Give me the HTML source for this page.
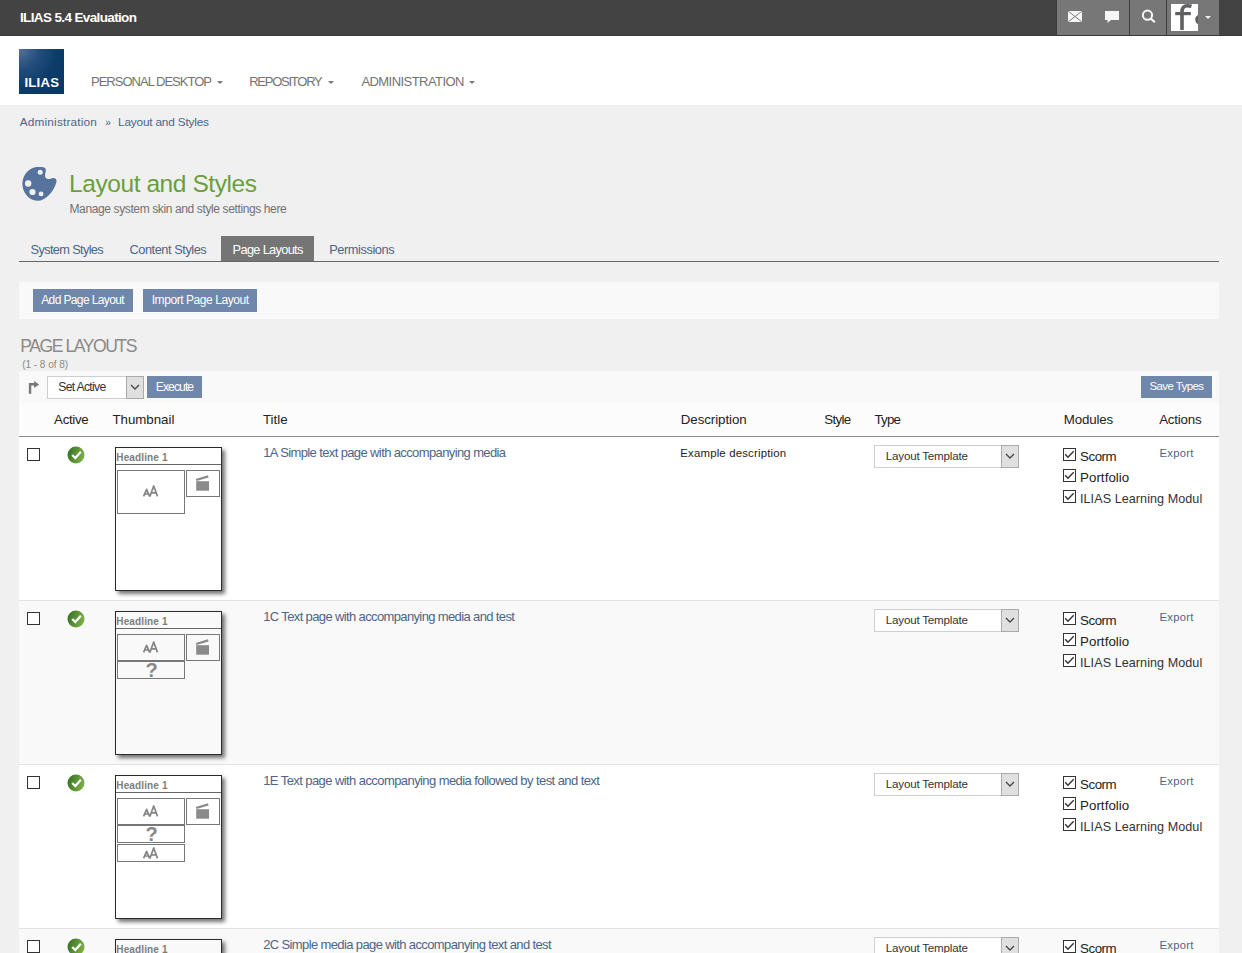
<!DOCTYPE html>
<html><head><meta charset="utf-8"><style>
*{box-sizing:border-box}
html,body{margin:0;padding:0}
body{width:1242px;height:953px;overflow:hidden;background:#f0f0f0;font-family:"Liberation Sans",sans-serif;position:relative;color:#161616}
.abs{position:absolute;white-space:nowrap;line-height:normal}
.r{position:absolute}
.caret{position:absolute;width:0;height:0;border-left:3px solid transparent;border-right:3px solid transparent;border-top:3px solid #777}
.btn{position:absolute;background:#6e87aa}
.sel{position:absolute;border:1px solid #cfcfcf;background:#fff}
.selb{position:absolute;background:#e0e0e0;border:1px solid #aaa}
.cb{position:absolute;width:13px;height:13px;border:1.2px solid #333;background:#fff}
.thumb{position:absolute;width:107px;height:144px;border:1px solid #2a2a2a;box-shadow:3px 3px 4px rgba(0,0,0,0.55)}
.tbx{position:absolute;border:1px solid #777}
</style></head><body>
<div class="r" style="left:0;top:0;width:1242px;height:36px;background:#434343;border-bottom:1px solid #383838"></div>
<div class="abs" style="left:20.00px;top:10.00px;font-size:13.5px;color:#fff;letter-spacing:-0.635px;font-weight:bold;">ILIAS 5.4 Evaluation</div>
<div class="r" style="left:1056px;top:0;width:163px;height:35px;background:#777;border-left:1px solid #3c3c3c"></div>
<div class="r" style="left:1129px;top:0;width:1px;height:35px;background:#3a3a3a"></div>
<div class="r" style="left:1166px;top:0;width:1px;height:35px;background:#3a3a3a"></div>
<svg class="r" style="left:1068px;top:11px" width="14" height="11" viewBox="0 0 14 11"><rect x="0" y="0" width="14" height="11" fill="#f7f7f7"/><path d="M0.3 0.3 L13.7 10.7 M13.7 0.3 L0.3 10.7" fill="none" stroke="#7a7a7a" stroke-width="1"/></svg>
<svg class="r" style="left:1105px;top:11px" width="14" height="12" viewBox="0 0 14 12"><path d="M0 0 H14 V9 H6 L2.5 12 V9 H0 Z" fill="#f5f5f5"/></svg>
<svg class="r" style="left:1139px;top:7px" width="18" height="18" viewBox="0 0 18 18"><circle cx="8.5" cy="8.2" r="4.6" fill="none" stroke="#f8f8f8" stroke-width="2"/><path d="M11.8 11.5 L15.8 15.2" stroke="#f8f8f8" stroke-width="2.2"/></svg>
<div class="r" style="left:1171px;top:4px;width:27px;height:27px;background:#fff;overflow:hidden"><svg width="27" height="27" viewBox="0 0 27 27" style="position:absolute;left:0;top:0"><path d="M11 26 V8 C11 3.5 13 1.8 16.5 1.8 C18 1.8 19.5 2 20.5 2.3" fill="none" stroke="#5f6063" stroke-width="3.6"/><path d="M4.2 9.6 H19.8" stroke="#5f6063" stroke-width="3.2"/><circle cx="29.2" cy="15.6" r="3.6" fill="none" stroke="#5f6063" stroke-width="2.8"/></svg></div>
<div class="caret" style="left:1205px;top:16px;border-top-color:#f0f0f0"></div>
<div class="r" style="left:0;top:36px;width:1242px;height:69px;background:#fff"></div>
<div class="r" style="left:19px;top:49px;width:45px;height:45px;background:radial-gradient(circle at 0% 0%,#54729a 0%,#234d7a 32%,#0c3b69 62%,#073765 100%)"></div>
<div class="abs" style="left:24.50px;top:74.60px;font-size:13.2px;color:#fff;letter-spacing:0.194px;font-weight:bold;">ILIAS</div>
<div class="abs" style="left:91.00px;top:74.00px;font-size:13px;color:#737373;letter-spacing:-0.990px;">PERSONAL DESKTOP</div>
<div class="caret" style="left:217px;top:81px"></div>
<div class="abs" style="left:249.20px;top:74.00px;font-size:13px;color:#737373;letter-spacing:-1.240px;">REPOSITORY</div>
<div class="caret" style="left:328px;top:81px"></div>
<div class="abs" style="left:361.40px;top:74.00px;font-size:13px;color:#737373;letter-spacing:-0.557px;">ADMINISTRATION</div>
<div class="caret" style="left:469px;top:81px"></div>
<div class="abs" style="left:19.80px;top:115.00px;font-size:11.8px;color:#4c6586;letter-spacing:0.173px;">Administration</div>
<div class="abs" style="left:105.20px;top:117.30px;font-size:10px;color:#4c6586;letter-spacing:0.000px;">»</div>
<div class="abs" style="left:118.00px;top:115.00px;font-size:11.8px;color:#4c6586;letter-spacing:-0.176px;">Layout and Styles</div>
<svg class="r" style="left:18px;top:162px" width="44" height="44" viewBox="0 0 44 44">
<path fill="#55739d" d="M18.5 5.1 C23 4.8 26 4.8 27.5 6.5 C28.5 8 27 11 27 14 C27 16.5 30 18 33 16.5 C36 15 39 16.5 38.5 19.5 C37 26 33 33 25 37.5 C18 41 9 37 5.5 28 C3 21 5 13 10 9 C12.5 7 15.5 5.5 18.5 5.1 Z"/>
<circle cx="22.2" cy="10.2" r="2.5" fill="#f0f0f0"/><circle cx="10.2" cy="21.5" r="3.2" fill="#f0f0f0"/><circle cx="14.5" cy="30" r="3.1" fill="#f0f0f0"/><circle cx="23.1" cy="31.9" r="2.4" fill="#f0f0f0"/></svg>
<div class="abs" style="left:69.00px;top:170.00px;font-size:24.5px;color:#6a9f3c;letter-spacing:-0.423px;">Layout and Styles</div>
<div class="abs" style="left:69.50px;top:202.20px;font-size:12px;color:#707070;letter-spacing:-0.380px;">Manage system skin and style settings here</div>
<div class="r" style="left:221px;top:236px;width:93px;height:25px;background:#757575"></div>
<div class="abs" style="left:30.60px;top:242.00px;font-size:12.8px;color:#4c6586;letter-spacing:-0.666px;">System Styles</div>
<div class="abs" style="left:129.50px;top:242.00px;font-size:12.8px;color:#4c6586;letter-spacing:-0.459px;">Content Styles</div>
<div class="abs" style="left:232.60px;top:242.00px;font-size:12.8px;color:#fff;letter-spacing:-0.679px;">Page Layouts</div>
<div class="abs" style="left:329.20px;top:242.00px;font-size:12.8px;color:#4c6586;letter-spacing:-0.430px;">Permissions</div>
<div class="r" style="left:19px;top:261px;width:1200px;height:1px;background:#666"></div>
<div class="r" style="left:19px;top:282px;width:1200px;height:37px;background:#f9f9f9"></div>
<div class="btn" style="left:33px;top:289px;width:100px;height:23px"></div>
<div class="abs" style="left:41.20px;top:293.20px;font-size:12px;color:#fff;letter-spacing:-0.614px;">Add Page Layout</div>
<div class="btn" style="left:143px;top:289px;width:114px;height:23px"></div>
<div class="abs" style="left:151.70px;top:293.20px;font-size:12px;color:#fff;letter-spacing:-0.427px;">Import Page Layout</div>
<div class="abs" style="left:20.30px;top:336.00px;font-size:17.6px;color:#8a8a8a;letter-spacing:-1.475px;">PAGE LAYOUTS</div>
<div class="abs" style="left:22.20px;top:359.00px;font-size:10px;color:#8a8a8a;letter-spacing:-0.023px;">(1 - 8 of 8)</div>
<div class="r" style="left:19px;top:371px;width:1200px;height:582px;background:#fff"></div>
<div class="r" style="left:19px;top:371px;width:1200px;height:32px;background:#f9f9f9"></div>
<div class="r" style="left:19px;top:403px;width:1200px;height:32px;background:#fcfcfc"></div>
<div class="r" style="left:19px;top:436px;width:1200px;height:1px;background:#8c8c8c;box-shadow:0 1px 1px rgba(0,0,0,0.12)"></div>
<svg class="r" style="left:28px;top:380px" width="12" height="14" viewBox="0 0 12 14"><path d="M2.05 13.8 V4.3 H7" fill="none" stroke="#777" stroke-width="2.4"/><path d="M6.1 0.9 L11.1 4.4 L6.1 8 Z" fill="#777"/></svg>
<div class="sel" style="left:47px;top:376px;width:97px;height:23px"></div><div class="selb" style="left:126px;top:376px;width:18px;height:23px"></div><svg class="r" style="left:130.0px;top:384.0px" width="10" height="6" viewBox="0 0 10 6"><path d="M1 1 L5 5 L9 1" fill="none" stroke="#444" stroke-width="1.3"/></svg>
<div class="abs" style="left:58.30px;top:380.20px;font-size:12.2px;color:#333;letter-spacing:-0.692px;">Set Active</div>
<div class="btn" style="left:147px;top:376px;width:55px;height:22px"></div>
<div class="abs" style="left:155.80px;top:380.20px;font-size:12.2px;color:#fff;letter-spacing:-0.951px;">Execute</div>
<div class="btn" style="left:1141px;top:376px;width:71px;height:22px"></div>
<div class="abs" style="left:1149.40px;top:380.20px;font-size:11.5px;color:#fff;letter-spacing:-0.573px;">Save Types</div>
<div class="abs" style="left:54.10px;top:412.00px;font-size:13.3px;color:#222;letter-spacing:-0.328px;">Active</div>
<div class="abs" style="left:112.40px;top:412.00px;font-size:13.3px;color:#222;letter-spacing:-0.014px;">Thumbnail</div>
<div class="abs" style="left:262.90px;top:412.00px;font-size:13.3px;color:#222;letter-spacing:0.049px;">Title</div>
<div class="abs" style="left:680.80px;top:412.00px;font-size:13.3px;color:#222;letter-spacing:-0.060px;">Description</div>
<div class="abs" style="left:824.20px;top:412.00px;font-size:13.3px;color:#222;letter-spacing:-0.623px;">Style</div>
<div class="abs" style="left:874.50px;top:412.00px;font-size:13.3px;color:#222;letter-spacing:-0.787px;">Type</div>
<div class="abs" style="left:1063.70px;top:412.00px;font-size:13.3px;color:#222;letter-spacing:-0.129px;">Modules</div>
<div class="abs" style="left:1159.20px;top:412.00px;font-size:13.3px;color:#222;letter-spacing:-0.187px;">Actions</div>
<div class="r" style="left:19px;top:437px;width:1200px;height:164px;background:#fff;border-bottom:1px solid #e2e2e2"></div>
<div class="cb" style="left:27px;top:448px"></div>
<svg class="r" style="left:67px;top:446px" width="18" height="18" viewBox="0 0 18 18">
<defs><linearGradient id="g0" x1="0" y1="0" x2="1" y2="0.3"><stop offset="0" stop-color="#2f6d1f"/><stop offset="1" stop-color="#7aad45"/></linearGradient></defs>
<circle cx="9" cy="9" r="8.5" fill="url(#g0)"/>
<path d="M5.2 9.0 L8.3 12.1 L13.9 5.8" fill="none" stroke="#fff" stroke-width="2.3"/></svg>
<div class="thumb" style="left:115px;top:447px"><div class="r" style="left:0;top:16px;width:105px;height:1px;background:#666"></div><div class="tbx" style="left:1px;top:22px;width:68px;height:44px"></div><div class="tbx" style="left:70px;top:22px;width:34px;height:27px"></div></div><div class="abs" style="left:116.30px;top:451.80px;font-size:10px;color:#7d7d7d;letter-spacing:0.133px;font-weight:bold;">Headline 1</div><svg class="r" style="left:195px;top:474px" width="15" height="18" viewBox="0 0 15 18">
<rect x="1.2" y="7.2" width="12.8" height="9.5" fill="#8a8a8a"/>
<path d="M0.8 4.9 L12.9 1.2 L13.6 3.6 L1.5 7.1 Z" fill="#8a8a8a"/></svg><svg class="r" style="left:141px;top:484px" width="18" height="14" viewBox="0 0 18 14"><path d="M2.6 12.4 L5.6 5.4 L8.6 12.4 M3.9 10.0 H7.3 M8.9 12.4 L12.7 2.0 L16.5 12.4 M10.5 8.9 H14.9" fill="none" stroke="#858585" stroke-width="1.7" stroke-linejoin="round"/></svg>
<div class="abs" style="left:263.20px;top:445.30px;font-size:13px;color:#4c6586;letter-spacing:-0.617px;">1A Simple text page with accompanying media</div>
<div class="abs" style="left:680.30px;top:447.00px;font-size:11.4px;color:#222;letter-spacing:0.180px;">Example description</div>
<div class="sel" style="left:874px;top:445px;width:145px;height:23px"></div><div class="selb" style="left:1001px;top:445px;width:18px;height:23px"></div><svg class="r" style="left:1005.0px;top:453.0px" width="10" height="6" viewBox="0 0 10 6"><path d="M1 1 L5 5 L9 1" fill="none" stroke="#444" stroke-width="1.3"/></svg>
<div class="abs" style="left:885.80px;top:449.00px;font-size:11.6px;color:#333;letter-spacing:-0.201px;">Layout Template</div>
<div class="cb" style="left:1063px;top:448px"></div><svg class="r" style="left:1063px;top:448px" width="13" height="13" viewBox="0 0 13 13"><path d="M2.2 6.2 L4.9 9.2 L10.7 3.2" fill="none" stroke="#333" stroke-width="1.4"/></svg>
<div class="abs" style="left:1080.00px;top:449.00px;font-size:13.3px;color:#222;letter-spacing:-0.434px;">Scorm</div>
<div class="cb" style="left:1063px;top:469px"></div><svg class="r" style="left:1063px;top:469px" width="13" height="13" viewBox="0 0 13 13"><path d="M2.2 6.2 L4.9 9.2 L10.7 3.2" fill="none" stroke="#333" stroke-width="1.4"/></svg>
<div class="abs" style="left:1080.00px;top:470.00px;font-size:13.3px;color:#222;letter-spacing:0.061px;">Portfolio</div>
<div class="cb" style="left:1063px;top:490px"></div><svg class="r" style="left:1063px;top:490px" width="13" height="13" viewBox="0 0 13 13"><path d="M2.2 6.2 L4.9 9.2 L10.7 3.2" fill="none" stroke="#333" stroke-width="1.4"/></svg>
<div class="abs" style="left:1080.00px;top:492.00px;font-size:12.6px;color:#333;letter-spacing:0.057px;">ILIAS Learning Modul</div>
<div class="abs" style="left:1159.40px;top:447.20px;font-size:11.2px;color:#4c6586;letter-spacing:0.346px;">Export</div>
<div class="r" style="left:19px;top:601px;width:1200px;height:164px;background:#f9f9f9;border-bottom:1px solid #e2e2e2"></div>
<div class="cb" style="left:27px;top:612px"></div>
<svg class="r" style="left:67px;top:610px" width="18" height="18" viewBox="0 0 18 18">
<defs><linearGradient id="g1" x1="0" y1="0" x2="1" y2="0.3"><stop offset="0" stop-color="#2f6d1f"/><stop offset="1" stop-color="#7aad45"/></linearGradient></defs>
<circle cx="9" cy="9" r="8.5" fill="url(#g1)"/>
<path d="M5.2 9.0 L8.3 12.1 L13.9 5.8" fill="none" stroke="#fff" stroke-width="2.3"/></svg>
<div class="thumb" style="left:115px;top:611px"><div class="r" style="left:0;top:16px;width:105px;height:1px;background:#666"></div><div class="tbx" style="left:1px;top:22px;width:68px;height:27px"></div><div class="tbx" style="left:1px;top:49px;width:68px;height:18px"></div><div class="tbx" style="left:70px;top:22px;width:34px;height:27px"></div></div><div class="abs" style="left:116.30px;top:615.80px;font-size:10px;color:#7d7d7d;letter-spacing:0.133px;font-weight:bold;">Headline 1</div><svg class="r" style="left:195px;top:638px" width="15" height="18" viewBox="0 0 15 18">
<rect x="1.2" y="7.2" width="12.8" height="9.5" fill="#8a8a8a"/>
<path d="M0.8 4.9 L12.9 1.2 L13.6 3.6 L1.5 7.1 Z" fill="#8a8a8a"/></svg><svg class="r" style="left:141px;top:639.8px" width="18" height="14" viewBox="0 0 18 14"><path d="M2.6 12.4 L5.6 5.4 L8.6 12.4 M3.9 10.0 H7.3 M8.9 12.4 L12.7 2.0 L16.5 12.4 M10.5 8.9 H14.9" fill="none" stroke="#858585" stroke-width="1.7" stroke-linejoin="round"/></svg><div class="abs" style="left:145.40px;top:658.80px;font-size:20px;color:#888;letter-spacing:0.000px;font-weight:bold;">?</div>
<div class="abs" style="left:263.20px;top:609.30px;font-size:13px;color:#4c6586;letter-spacing:-0.630px;">1C Text page with accompanying media and test</div>
<div class="sel" style="left:874px;top:609px;width:145px;height:23px"></div><div class="selb" style="left:1001px;top:609px;width:18px;height:23px"></div><svg class="r" style="left:1005.0px;top:617.0px" width="10" height="6" viewBox="0 0 10 6"><path d="M1 1 L5 5 L9 1" fill="none" stroke="#444" stroke-width="1.3"/></svg>
<div class="abs" style="left:885.80px;top:613.00px;font-size:11.6px;color:#333;letter-spacing:-0.201px;">Layout Template</div>
<div class="cb" style="left:1063px;top:612px"></div><svg class="r" style="left:1063px;top:612px" width="13" height="13" viewBox="0 0 13 13"><path d="M2.2 6.2 L4.9 9.2 L10.7 3.2" fill="none" stroke="#333" stroke-width="1.4"/></svg>
<div class="abs" style="left:1080.00px;top:613.00px;font-size:13.3px;color:#222;letter-spacing:-0.434px;">Scorm</div>
<div class="cb" style="left:1063px;top:633px"></div><svg class="r" style="left:1063px;top:633px" width="13" height="13" viewBox="0 0 13 13"><path d="M2.2 6.2 L4.9 9.2 L10.7 3.2" fill="none" stroke="#333" stroke-width="1.4"/></svg>
<div class="abs" style="left:1080.00px;top:634.00px;font-size:13.3px;color:#222;letter-spacing:0.061px;">Portfolio</div>
<div class="cb" style="left:1063px;top:654px"></div><svg class="r" style="left:1063px;top:654px" width="13" height="13" viewBox="0 0 13 13"><path d="M2.2 6.2 L4.9 9.2 L10.7 3.2" fill="none" stroke="#333" stroke-width="1.4"/></svg>
<div class="abs" style="left:1080.00px;top:656.00px;font-size:12.6px;color:#333;letter-spacing:0.057px;">ILIAS Learning Modul</div>
<div class="abs" style="left:1159.40px;top:611.20px;font-size:11.2px;color:#4c6586;letter-spacing:0.346px;">Export</div>
<div class="r" style="left:19px;top:765px;width:1200px;height:164px;background:#fff;border-bottom:1px solid #e2e2e2"></div>
<div class="cb" style="left:27px;top:776px"></div>
<svg class="r" style="left:67px;top:774px" width="18" height="18" viewBox="0 0 18 18">
<defs><linearGradient id="g2" x1="0" y1="0" x2="1" y2="0.3"><stop offset="0" stop-color="#2f6d1f"/><stop offset="1" stop-color="#7aad45"/></linearGradient></defs>
<circle cx="9" cy="9" r="8.5" fill="url(#g2)"/>
<path d="M5.2 9.0 L8.3 12.1 L13.9 5.8" fill="none" stroke="#fff" stroke-width="2.3"/></svg>
<div class="thumb" style="left:115px;top:775px"><div class="r" style="left:0;top:16px;width:105px;height:1px;background:#666"></div><div class="tbx" style="left:1px;top:22px;width:68px;height:27px"></div><div class="tbx" style="left:1px;top:49px;width:68px;height:18px"></div><div class="tbx" style="left:1px;top:68px;width:68px;height:18px"></div><div class="tbx" style="left:70px;top:22px;width:34px;height:27px"></div></div><div class="abs" style="left:116.30px;top:779.80px;font-size:10px;color:#7d7d7d;letter-spacing:0.133px;font-weight:bold;">Headline 1</div><svg class="r" style="left:195px;top:802px" width="15" height="18" viewBox="0 0 15 18">
<rect x="1.2" y="7.2" width="12.8" height="9.5" fill="#8a8a8a"/>
<path d="M0.8 4.9 L12.9 1.2 L13.6 3.6 L1.5 7.1 Z" fill="#8a8a8a"/></svg><svg class="r" style="left:141px;top:803.8px" width="18" height="14" viewBox="0 0 18 14"><path d="M2.6 12.4 L5.6 5.4 L8.6 12.4 M3.9 10.0 H7.3 M8.9 12.4 L12.7 2.0 L16.5 12.4 M10.5 8.9 H14.9" fill="none" stroke="#858585" stroke-width="1.7" stroke-linejoin="round"/></svg><div class="abs" style="left:145.40px;top:822.80px;font-size:20px;color:#888;letter-spacing:0.000px;font-weight:bold;">?</div><svg class="r" style="left:141px;top:845.9px" width="18" height="14" viewBox="0 0 18 14"><path d="M2.6 12.4 L5.6 5.4 L8.6 12.4 M3.9 10.0 H7.3 M8.9 12.4 L12.7 2.0 L16.5 12.4 M10.5 8.9 H14.9" fill="none" stroke="#858585" stroke-width="1.7" stroke-linejoin="round"/></svg>
<div class="abs" style="left:263.20px;top:773.30px;font-size:13px;color:#4c6586;letter-spacing:-0.578px;">1E Text page with accompanying media followed by test and text</div>
<div class="sel" style="left:874px;top:773px;width:145px;height:23px"></div><div class="selb" style="left:1001px;top:773px;width:18px;height:23px"></div><svg class="r" style="left:1005.0px;top:781.0px" width="10" height="6" viewBox="0 0 10 6"><path d="M1 1 L5 5 L9 1" fill="none" stroke="#444" stroke-width="1.3"/></svg>
<div class="abs" style="left:885.80px;top:777.00px;font-size:11.6px;color:#333;letter-spacing:-0.201px;">Layout Template</div>
<div class="cb" style="left:1063px;top:776px"></div><svg class="r" style="left:1063px;top:776px" width="13" height="13" viewBox="0 0 13 13"><path d="M2.2 6.2 L4.9 9.2 L10.7 3.2" fill="none" stroke="#333" stroke-width="1.4"/></svg>
<div class="abs" style="left:1080.00px;top:777.00px;font-size:13.3px;color:#222;letter-spacing:-0.434px;">Scorm</div>
<div class="cb" style="left:1063px;top:797px"></div><svg class="r" style="left:1063px;top:797px" width="13" height="13" viewBox="0 0 13 13"><path d="M2.2 6.2 L4.9 9.2 L10.7 3.2" fill="none" stroke="#333" stroke-width="1.4"/></svg>
<div class="abs" style="left:1080.00px;top:798.00px;font-size:13.3px;color:#222;letter-spacing:0.061px;">Portfolio</div>
<div class="cb" style="left:1063px;top:818px"></div><svg class="r" style="left:1063px;top:818px" width="13" height="13" viewBox="0 0 13 13"><path d="M2.2 6.2 L4.9 9.2 L10.7 3.2" fill="none" stroke="#333" stroke-width="1.4"/></svg>
<div class="abs" style="left:1080.00px;top:820.00px;font-size:12.6px;color:#333;letter-spacing:0.057px;">ILIAS Learning Modul</div>
<div class="abs" style="left:1159.40px;top:775.20px;font-size:11.2px;color:#4c6586;letter-spacing:0.346px;">Export</div>
<div class="r" style="left:19px;top:929px;width:1200px;height:164px;background:#f9f9f9;border-bottom:1px solid #e2e2e2"></div>
<div class="cb" style="left:27px;top:940px"></div>
<svg class="r" style="left:67px;top:938px" width="18" height="18" viewBox="0 0 18 18">
<defs><linearGradient id="g3" x1="0" y1="0" x2="1" y2="0.3"><stop offset="0" stop-color="#2f6d1f"/><stop offset="1" stop-color="#7aad45"/></linearGradient></defs>
<circle cx="9" cy="9" r="8.5" fill="url(#g3)"/>
<path d="M5.2 9.0 L8.3 12.1 L13.9 5.8" fill="none" stroke="#fff" stroke-width="2.3"/></svg>
<div class="thumb" style="left:115px;top:939px"><div class="r" style="left:0;top:16px;width:105px;height:1px;background:#666"></div><div class="tbx" style="left:1px;top:22px;width:68px;height:27px"></div><div class="tbx" style="left:1px;top:49px;width:68px;height:18px"></div><div class="tbx" style="left:70px;top:22px;width:34px;height:27px"></div></div><div class="abs" style="left:116.30px;top:943.80px;font-size:10px;color:#7d7d7d;letter-spacing:0.133px;font-weight:bold;">Headline 1</div><svg class="r" style="left:195px;top:966px" width="15" height="18" viewBox="0 0 15 18">
<rect x="1.2" y="7.2" width="12.8" height="9.5" fill="#8a8a8a"/>
<path d="M0.8 4.9 L12.9 1.2 L13.6 3.6 L1.5 7.1 Z" fill="#8a8a8a"/></svg><svg class="r" style="left:141px;top:967.8px" width="18" height="14" viewBox="0 0 18 14"><path d="M2.6 12.4 L5.6 5.4 L8.6 12.4 M3.9 10.0 H7.3 M8.9 12.4 L12.7 2.0 L16.5 12.4 M10.5 8.9 H14.9" fill="none" stroke="#858585" stroke-width="1.7" stroke-linejoin="round"/></svg><div class="abs" style="left:145.40px;top:986.80px;font-size:20px;color:#888;letter-spacing:0.000px;font-weight:bold;">?</div>
<div class="abs" style="left:263.20px;top:937.30px;font-size:13px;color:#4c6586;letter-spacing:-0.622px;">2C Simple media page with accompanying text and test</div>
<div class="sel" style="left:874px;top:937px;width:145px;height:23px"></div><div class="selb" style="left:1001px;top:937px;width:18px;height:23px"></div><svg class="r" style="left:1005.0px;top:945.0px" width="10" height="6" viewBox="0 0 10 6"><path d="M1 1 L5 5 L9 1" fill="none" stroke="#444" stroke-width="1.3"/></svg>
<div class="abs" style="left:885.80px;top:941.00px;font-size:11.6px;color:#333;letter-spacing:-0.201px;">Layout Template</div>
<div class="cb" style="left:1063px;top:940px"></div><svg class="r" style="left:1063px;top:940px" width="13" height="13" viewBox="0 0 13 13"><path d="M2.2 6.2 L4.9 9.2 L10.7 3.2" fill="none" stroke="#333" stroke-width="1.4"/></svg>
<div class="abs" style="left:1080.00px;top:941.00px;font-size:13.3px;color:#222;letter-spacing:-0.434px;">Scorm</div>
<div class="cb" style="left:1063px;top:961px"></div><svg class="r" style="left:1063px;top:961px" width="13" height="13" viewBox="0 0 13 13"><path d="M2.2 6.2 L4.9 9.2 L10.7 3.2" fill="none" stroke="#333" stroke-width="1.4"/></svg>
<div class="abs" style="left:1080.00px;top:962.00px;font-size:13.3px;color:#222;letter-spacing:0.061px;">Portfolio</div>
<div class="cb" style="left:1063px;top:982px"></div><svg class="r" style="left:1063px;top:982px" width="13" height="13" viewBox="0 0 13 13"><path d="M2.2 6.2 L4.9 9.2 L10.7 3.2" fill="none" stroke="#333" stroke-width="1.4"/></svg>
<div class="abs" style="left:1080.00px;top:984.00px;font-size:12.6px;color:#333;letter-spacing:0.057px;">ILIAS Learning Modul</div>
<div class="abs" style="left:1159.40px;top:939.20px;font-size:11.2px;color:#4c6586;letter-spacing:0.346px;">Export</div>
</body></html>
